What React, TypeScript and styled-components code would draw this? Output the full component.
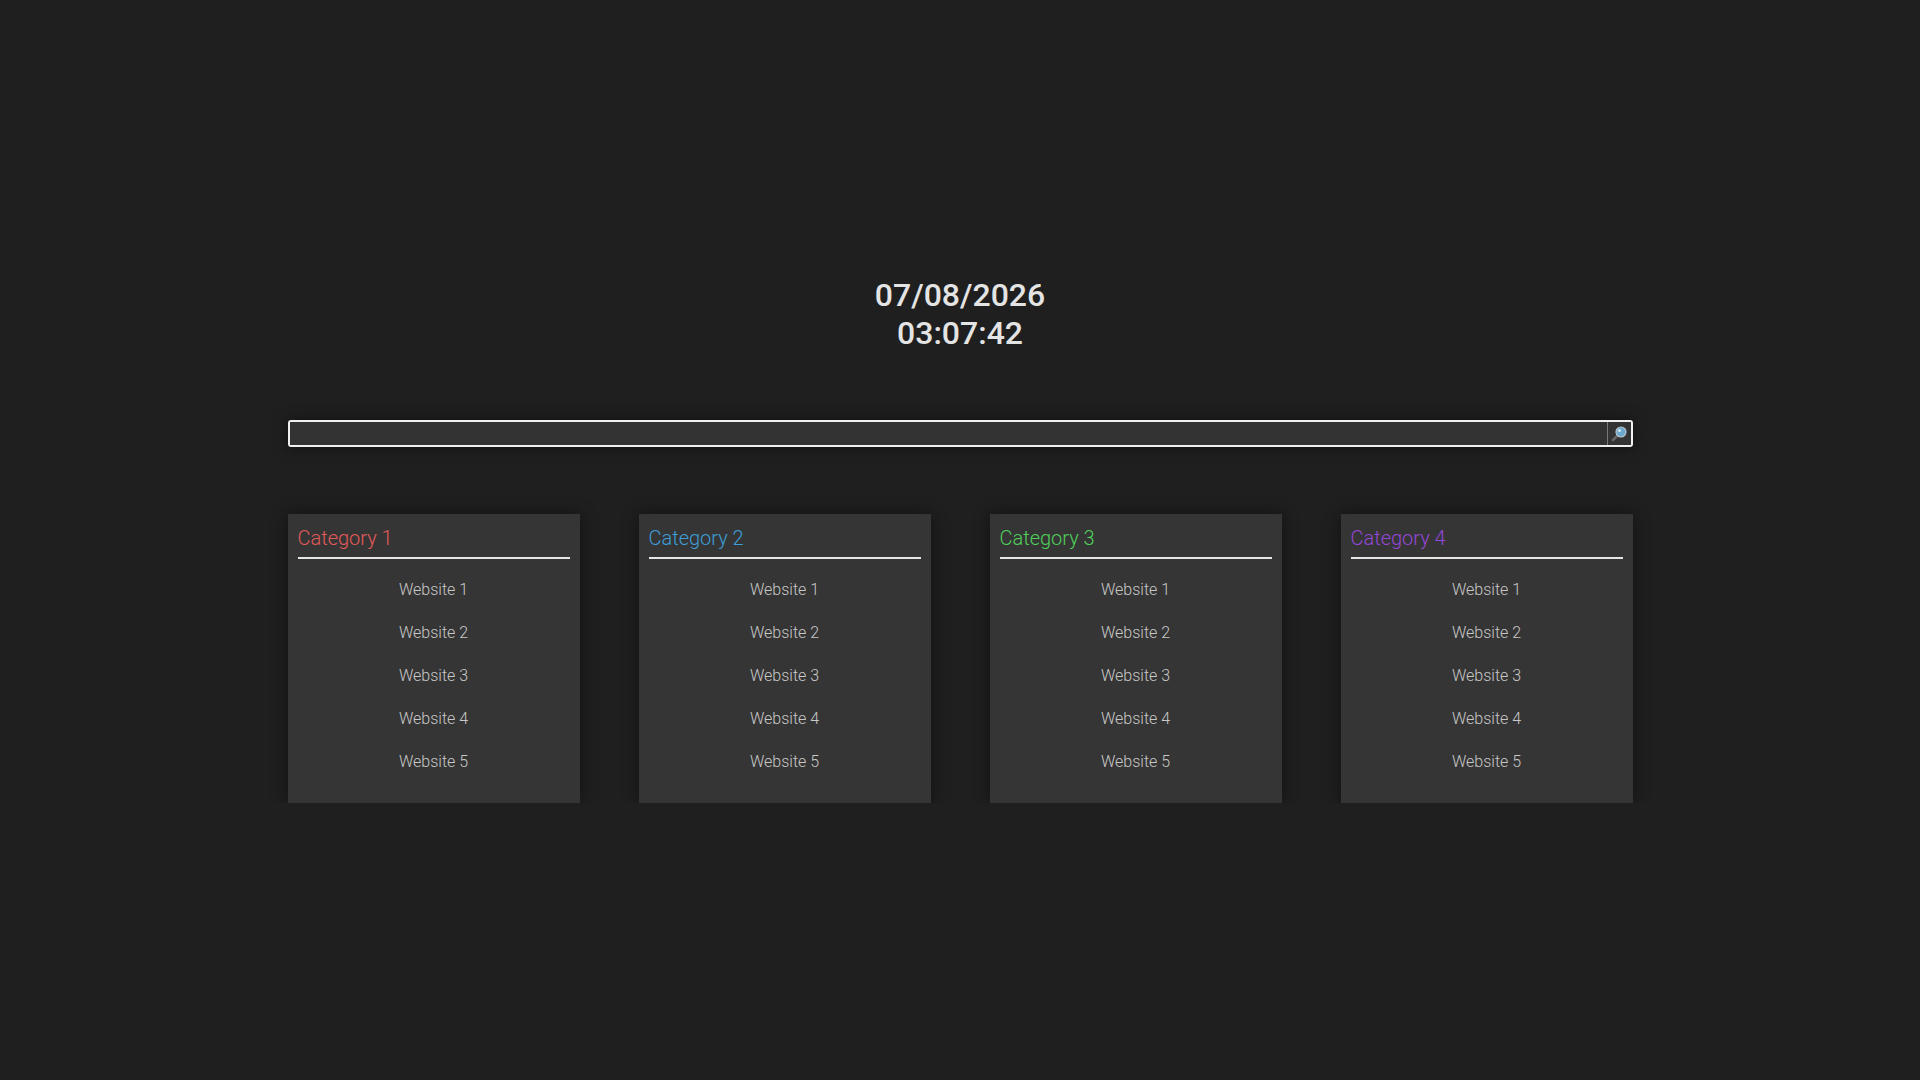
import styled, { createGlobalStyle } from "styled-components";

const GlobalStyle = createGlobalStyle`
  body {
    margin: 0;
    background: #1f1f1f;
    font-family: Roboto, "Liberation Sans", sans-serif;
  }
`;

const categories = [
  { name: "Category 1", color: "#e25a5a" },
  { name: "Category 2", color: "#3d9ed9" },
  { name: "Category 3", color: "#4fd05a" },
  { name: "Category 4", color: "#9447d6" },
];

const Page = styled.div`
  width: 1345px;
  margin: 0 auto;
  padding-top: 276px;
  display: flex;
  flex-direction: column;
`;

const Clock = styled.div`
  text-align: center;
  color: #e4e4e4;
  font-size: 32px;
  font-weight: 500;
  line-height: 38px;
`;

const SearchBar = styled.form`
  margin-top: 68px;
  display: flex;
  height: 27px;
  border: 2px solid #f0f0f0;
  border-radius: 3px;
  background: #2f2f2f;
  box-shadow: 0 0 14px rgba(0, 0, 0, 0.5);
  box-sizing: border-box;
  overflow: hidden;
`;

const SearchInput = styled.input`
  flex: 1;
  background: #333;
  border: none;
  outline: none;
  color: #eee;
  text-align: center;
  font-family: inherit;
  font-size: 15px;
  caret-color: #eee;
`;

const SearchButton = styled.button`
  width: 24px;
  padding: 0;
  border: none;
  border-left: 1px solid #777;
  background: #333;
  display: flex;
  align-items: center;
  justify-content: center;
`;

const Grid = styled.div`
  margin-top: 67px;
  display: grid;
  grid-template-columns: repeat(4, 292px);
  justify-content: space-between;
`;

const Card = styled.div`
  background: #353535;
  height: 289px;
  padding: 10px;
  box-sizing: border-box;
  box-shadow: 0 0 16px rgba(0, 0, 0, 0.45);
`;

const Title = styled.div<{ $color: string }>`
  color: ${(p) => p.$color};
  font-size: 20px;
  font-weight: 300;
  padding: 2px 0 7px;
  border-bottom: 2px solid #e6e6e6;
`;

const Links = styled.ul`
  list-style: none;
  margin: 0;
  padding: 21px 0 0;
  display: flex;
  flex-direction: column;
  gap: 24px;
  text-align: center;
`;

const LinkItem = styled.li`
  color: #c8c8c8;
  font-size: 16px;
  font-weight: 300;
  line-height: 19px;
`;

const Magnifier = () => (
  <svg width="18" height="18" viewBox="0 0 18 18">
    <line x1="3" y1="15" x2="8" y2="10" stroke="#666" strokeWidth="2.5" strokeLinecap="round" />
    <circle cx="11" cy="7" r="5" fill="#6ba9cf" stroke="#b8c4cc" strokeWidth="1.2" />
    <circle cx="9.5" cy="5.5" r="1.5" fill="#cfe6f4" />
  </svg>
);

export default function App() {
  return (
    <>
      <GlobalStyle />
      <Page>
        <Clock>
          07/08/2026
          <br />
          03:07:42
        </Clock>
        <SearchBar onSubmit={(e) => e.preventDefault()}>
          <SearchInput autoFocus />
          <SearchButton type="submit">
            <Magnifier />
          </SearchButton>
        </SearchBar>
        <Grid>
          {categories.map((c) => (
            <Card key={c.name}>
              <Title $color={c.color}>{c.name}</Title>
              <Links>
                {[1, 2, 3, 4, 5].map((n) => (
                  <LinkItem key={n}>Website {n}</LinkItem>
                ))}
              </Links>
            </Card>
          ))}
        </Grid>
      </Page>
    </>
  );
}
